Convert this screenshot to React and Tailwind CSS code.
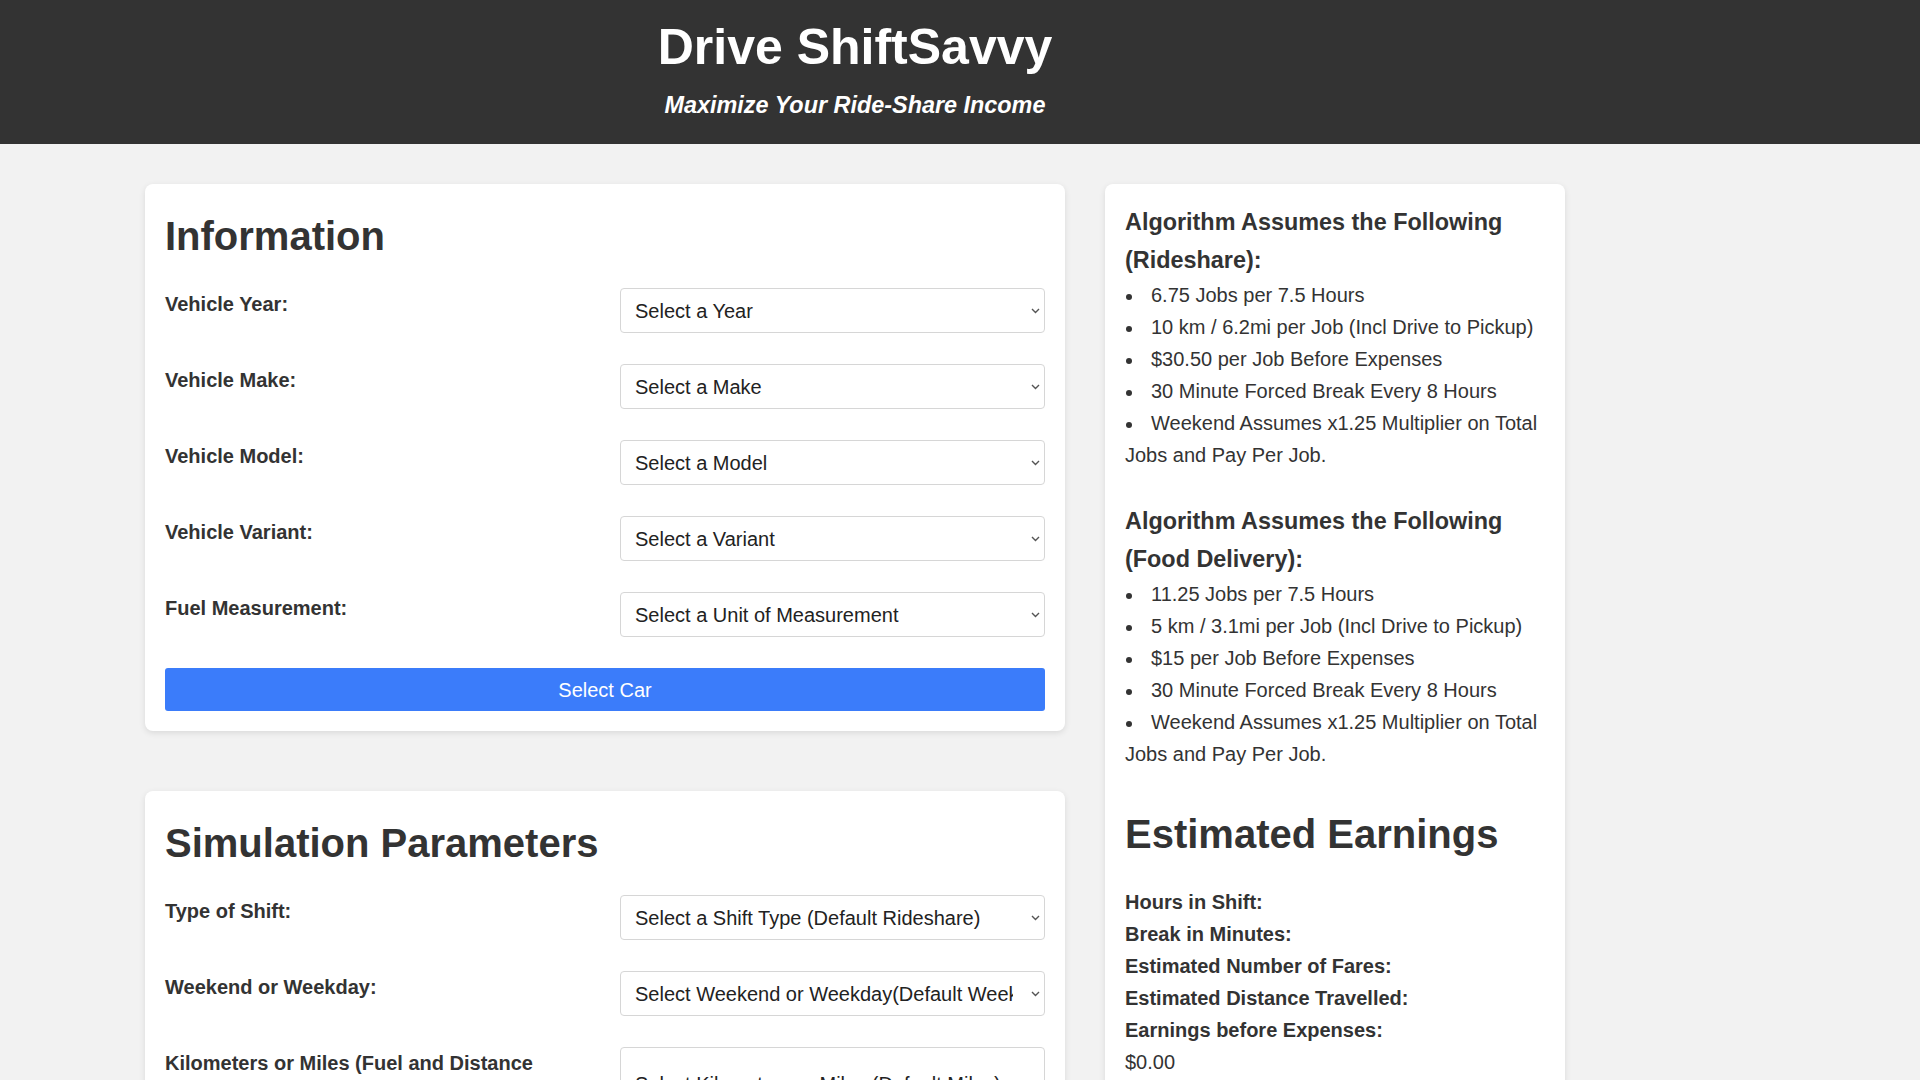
import React from 'react';

const Chevron = () => (
    <svg width="9" height="6" viewBox="0 0 9 6" className="shrink-0">
        <path d="M1 1l3.5 3.5L8 1" fill="none" stroke="#555" strokeWidth="1.4" />
    </svg>
);

const FakeSelect = ({ text, tall }) => (
    <div
        className={`flex items-center justify-between bg-white border border-[#d6d6d6] rounded-[4px] pl-[14px] pr-[4px] ${tall ? 'h-[74px]' : 'h-[45px]'}`}
    >
        <span className="overflow-hidden whitespace-nowrap w-[378px] text-[20px] text-[#222]">{text}</span>
        <Chevron />
    </div>
);

const FieldRow = ({ label, placeholder, tall }) => (
    <div className="grid grid-cols-2 gap-[30px] mb-[31px] items-start">
        <div className="font-bold text-[20px] leading-[32px] text-[#333]">{label}</div>
        <FakeSelect text={placeholder} tall={tall} />
    </div>
);

const Bullet = ({ children }) => (
    <li>
        <span className="inline-block w-[26px]">
            <span className="inline-block w-[6px] h-[6px] rounded-full bg-[#333] align-middle ml-[1px]"></span>
        </span>
        {children}
    </li>
);

const rideshare = [
    '6.75 Jobs per 7.5 Hours',
    '10 km / 6.2mi per Job (Incl Drive to Pickup)',
    '$30.50 per Job Before Expenses',
    '30 Minute Forced Break Every 8 Hours',
    'Weekend Assumes x1.25 Multiplier on Total Jobs and Pay Per Job.'
];

const delivery = [
    '11.25 Jobs per 7.5 Hours',
    '5 km / 3.1mi per Job (Incl Drive to Pickup)',
    '$15 per Job Before Expenses',
    '30 Minute Forced Break Every 8 Hours',
    'Weekend Assumes x1.25 Multiplier on Total Jobs and Pay Per Job.'
];

const earnings = [
    ['Hours in Shift:', null],
    ['Break in Minutes:', null],
    ['Estimated Number of Fares:', null],
    ['Estimated Distance Travelled:', null],
    ['Earnings before Expenses:', '$0.00'],
    ['Estimated Fuel Cost:', '$0.00'],
    ['Earnings after Fuel:', '$0.00']
];

export default function App() {
    return (
        <div className="min-h-screen bg-[#f2f2f2] text-[#333] text-[20px] leading-[1.6] font-['Liberation_Sans',Arial,sans-serif]">
            {/* Header */}
            <header className="bg-[#333] text-white pt-[7px] pb-[20px]">
                <div className="ml-[145px] w-[1420px] text-center">
                    <h1 className="text-[50px] font-bold leading-[80px]">Drive ShiftSavvy</h1>
                    <p className="text-[23.4px] font-bold italic leading-[37.44px]">Maximize Your Ride-Share Income</p>
                </div>
            </header>

            <main className="ml-[145px] w-[1420px] pt-[40px] flex gap-[40px] items-start">
                {/* Left column */}
                <div className="w-[920px] flex flex-col gap-[60px]">
                    <section className="bg-white rounded-[8px] shadow-[0_2px_6px_rgba(0,0,0,0.1)] p-[20px]">
                        <h2 className="text-[40px] font-bold leading-[64px] mb-[20px]">Information</h2>
                        <FieldRow label="Vehicle Year:" placeholder="Select a Year" />
                        <FieldRow label="Vehicle Make:" placeholder="Select a Make" />
                        <FieldRow label="Vehicle Model:" placeholder="Select a Model" />
                        <FieldRow label="Vehicle Variant:" placeholder="Select a Variant" />
                        <FieldRow label="Fuel Measurement:" placeholder="Select a Unit of Measurement" />
                        <button className="w-full h-[43px] bg-[#3b7cfa] text-white text-[20px] rounded-[3px]">Select Car</button>
                    </section>

                    <section className="bg-white rounded-[8px] shadow-[0_2px_6px_rgba(0,0,0,0.1)] p-[20px]">
                        <h2 className="text-[40px] font-bold leading-[64px] mb-[20px]">Simulation Parameters</h2>
                        <FieldRow label="Type of Shift:" placeholder="Select a Shift Type (Default Rideshare)" />
                        <FieldRow label="Weekend or Weekday:" placeholder="Select Weekend or Weekday(Default Weekday)" />
                        <FieldRow
                            label="Kilometers or Miles (Fuel and Distance Measurement):"
                            placeholder="Select Kilometers or Miles (Default Miles)"
                            tall
                        />
                        <FieldRow label="Hours in Shift:" placeholder="Select Hours (Default 7.5)" />
                        <button className="w-full h-[43px] bg-[#3b7cfa] text-white text-[20px] rounded-[3px]">Run Simulation</button>
                    </section>
                </div>

                {/* Right column */}
                <aside className="w-[460px] bg-white rounded-[8px] shadow-[0_2px_6px_rgba(0,0,0,0.1)] p-[20px]">
                    <h3 className="text-[23.4px] font-bold leading-[37.44px]">Algorithm Assumes the Following (Rideshare):</h3>
                    <ul>
                        {rideshare.map(item => (
                            <Bullet key={item}>{item}</Bullet>
                        ))}
                    </ul>

                    <h3 className="text-[23.4px] font-bold leading-[37.44px] mt-[32px]">Algorithm Assumes the Following (Food Delivery):</h3>
                    <ul>
                        {delivery.map(item => (
                            <Bullet key={item}>{item}</Bullet>
                        ))}
                    </ul>

                    <h2 className="text-[40px] font-bold leading-[64px] mt-[32px] mb-[20px]">Estimated Earnings</h2>
                    <div>
                        {earnings.map(([label, value]) => (
                            <div key={label}>
                                <div className="font-bold">{label}</div>
                                {value && <div>{value}</div>}
                            </div>
                        ))}
                    </div>
                </aside>
            </main>
        </div>
    );
}
